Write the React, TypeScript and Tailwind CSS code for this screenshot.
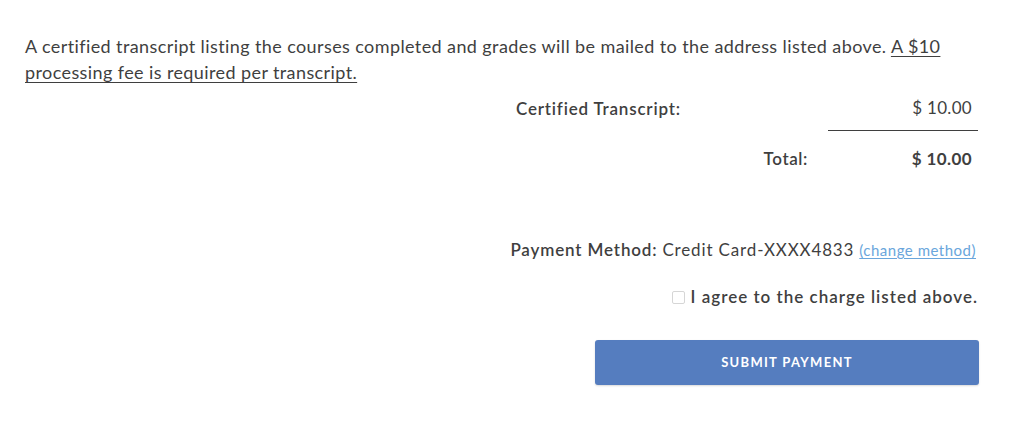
const App = () => {
  return (
    <div
      className="h-[423px] w-[1024px] bg-white pl-[25px] pr-[46px] text-[#3f3f3f]"
      style={{ fontFamily: "Lato, 'Open Sans', sans-serif" }}
    >
      <p className="pt-[33px] text-[18px] leading-[26px] tracking-[0.4px]">
        A certified transcript listing the courses completed and grades will be
        mailed to the address listed above.{" "}
        <span className="underline underline-offset-[3px]">
          A $10 processing fee is required per transcript.
        </span>
      </p>

      <div className="ml-auto mt-[1px] w-[462px] text-[17px] leading-[24px]">
        <div className="flex items-center">
          <div className="flex-1 py-[10px] font-semibold tracking-[0.8px]">
            Certified Transcript:
          </div>
          <div className="w-[150px] border-b border-b-[#3f3f3f] py-[10px] pr-[6px] text-right tracking-[0.3px]">
            $ 10.00
          </div>
        </div>
        <div className="flex items-center">
          <div className="flex-1 pb-[8px] pr-[20px] pt-[16px] text-right font-semibold tracking-[0.6px]">
            Total:
          </div>
          <div className="w-[150px] pb-[8px] pr-[6px] pt-[16px] text-right font-bold tracking-[0.4px]">
            $ 10.00
          </div>
        </div>
      </div>

      <div className="mt-[59px] flex items-baseline justify-end pr-[2px] text-[17px] leading-[24px] tracking-[0.85px]">
        <span className="font-semibold">Payment Method:</span>
        <span className="ml-[5px]">Credit Card-XXXX4833</span>
        <a
          href="#"
          className="ml-[5px] text-[15px] tracking-[0.5px] text-[#6aa6dc] underline underline-offset-2"
        >
          (change method)
        </a>
      </div>

      <label className="mt-[23px] flex items-center justify-end gap-[6px] text-[17px] font-semibold leading-[24px] tracking-[1px]">
        <input
          type="checkbox"
          className="h-[13px] w-[13px] appearance-none rounded-[2px] border border-[#d6d6d6] bg-white"
        />
        I agree to the charge listed above.
      </label>

      <div className="mt-[31px] flex justify-end">
        <button className="-mr-[1px] h-[45px] w-[384px] rounded-[3px] bg-[#557dbf] text-[13px] font-bold tracking-[1.3px] text-white shadow-[0_1px_2px_rgba(0,0,0,0.15)]">
          SUBMIT PAYMENT
        </button>
      </div>
    </div>
  );
};

export default App;
